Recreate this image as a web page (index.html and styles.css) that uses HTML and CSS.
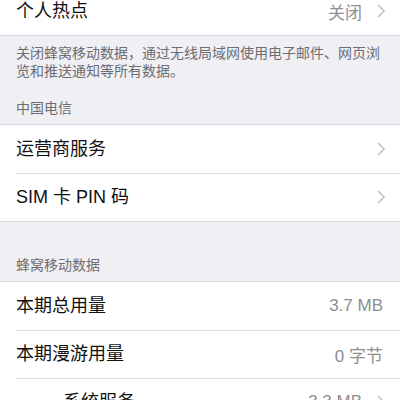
FILE: index.html
```html
<!DOCTYPE html>
<html lang="zh-CN">
<head>
<meta charset="utf-8">
<link rel="stylesheet" href="styles.css">
</head>
<body>
<div class="page">
  <div class="group first">
    <div class="row">
      <span class="label">个人热点</span>
      <span class="value">关闭</span>
      <svg class="chev" viewBox="0 0 8 14"><path d="M1 1l6 6-6 6"/></svg>
    </div>
  </div>
  <div class="footer">关闭蜂窝移动数据，通过无线局域网使用电子邮件、网页浏览和推送通知等所有数据。</div>

  <div class="header h1">中国电信</div>
  <div class="group">
    <div class="row">
      <span class="label">运营商服务</span>
      <svg class="chev" viewBox="0 0 8 14"><path d="M1 1l6 6-6 6"/></svg>
    </div>
    <div class="row">
      <span class="label">SIM 卡 PIN 码</span>
      <svg class="chev" viewBox="0 0 8 14"><path d="M1 1l6 6-6 6"/></svg>
    </div>
  </div>

  <div class="header h2">蜂窝移动数据</div>
  <div class="group">
    <div class="row">
      <span class="label">本期总用量</span>
      <span class="value end">3.7 MB</span>
    </div>
    <div class="row">
      <span class="label">本期漫游用量</span>
      <span class="value end">0 字节</span>
    </div>
    <div class="row">
      <span class="label indent">系统服务</span>
      <span class="value">3.3 MB</span>
      <svg class="chev" viewBox="0 0 8 14"><path d="M1 1l6 6-6 6"/></svg>
    </div>
  </div>
</div>
</body>
</html>
```
FILE: styles.css
```css
html, body {
  margin: 0;
  padding: 0;
  background: #efeff4;
  overflow: hidden;
}
.page {
  width: 400px;
  font-family: "Liberation Sans", "Noto Sans CJK SC", sans-serif;
  color: #111;
}
.group {
  background: #fff;
  border-top: 1px solid #d9d9de;
  border-bottom: 1px solid #d9d9de;
}
.group.first {
  margin-top: -13px;
  border-top: none;
}
.row {
  height: 48px;
  display: flex;
  align-items: center;
  padding: 0 15px 0 16px;
  margin-left: 0;
  position: relative;
  box-sizing: border-box;
}
.group .row + .row {
  box-shadow: inset 0 0 0 0 transparent;
}
.group .row + .row::before {
  content: "";
  position: absolute;
  left: 16px;
  right: 0;
  top: 0;
  border-top: 1px solid #dcdce0;
}
.label {
  flex: 1;
  font-size: 18px;
  line-height: 22px;
}
.label.indent {
  padding-left: 47px;
}
.value {
  font-size: 17px;
  color: #8e8e93;
  margin-right: 15px;
}
.value.end {
  margin-right: 2px;
}
.chev {
  width: 8px;
  height: 14px;
  fill: none;
  stroke: #c4c4c9;
  stroke-width: 1.6;
}
.footer {
  padding: 8px 16px 0;
  font-size: 14px;
  line-height: 18px;
  color: #6d6d72;
}
.header {
  font-size: 14px;
  line-height: 18px;
  color: #6d6d72;
  padding: 0 16px 7px;
}
.header.h1 {
  padding-top: 19px;
}
.header.h2 {
  padding-top: 34px;
}
```
